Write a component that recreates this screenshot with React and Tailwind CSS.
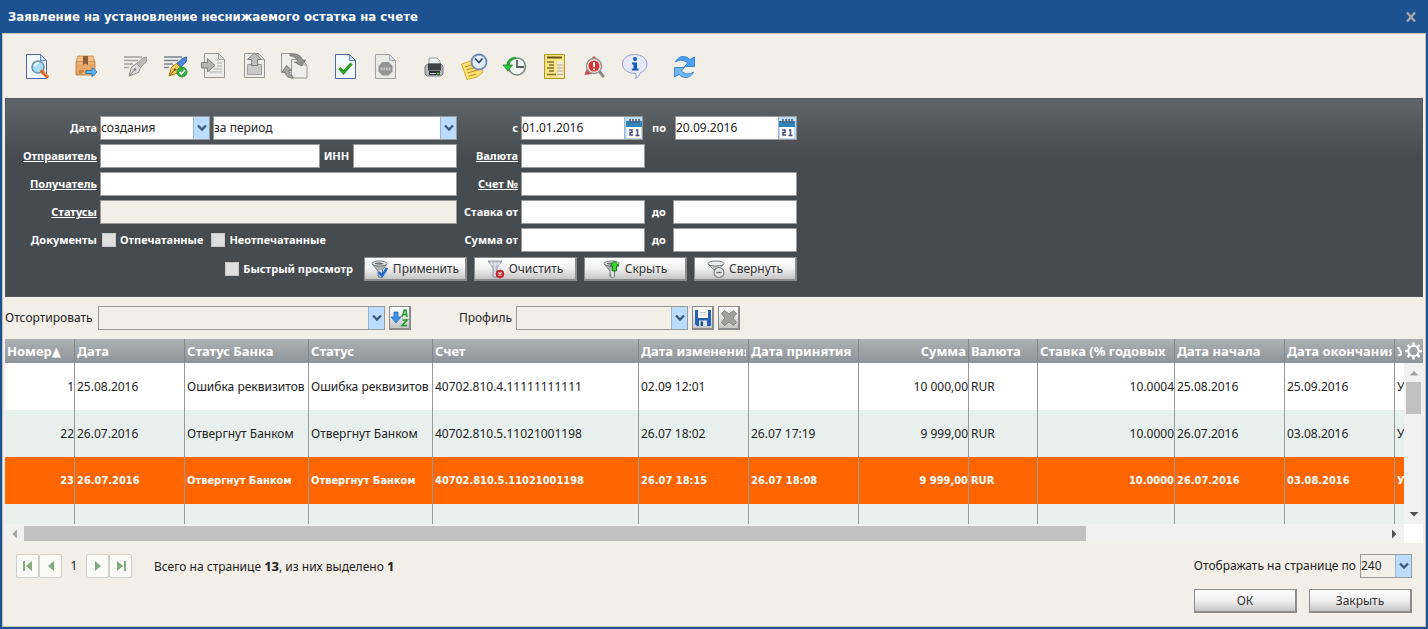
import {useState} from "react"

const columns = [
    {title: "Номер▲", key: "num", width: "w-[70px]", right: true},
    {title: "Дата", key: "date", width: "w-[110px]"},
    {title: "Статус Банка", key: "bankStatus", width: "w-[124px]"},
    {title: "Статус", key: "status", width: "w-[124px]"},
    {title: "Счет", key: "account", width: "w-[206px]"},
    {title: "Дата изменения", key: "changed", width: "w-[110px]"},
    {title: "Дата принятия", key: "accepted", width: "w-[110px]"},
    {title: "Сумма", key: "sum", width: "w-[110px]", right: true, rightTitle: true},
    {title: "Валюта", key: "currency", width: "w-[69px]"},
    {title: "Ставка (% годовых", key: "rate", width: "w-[137px]", right: true},
    {title: "Дата начала", key: "start", width: "w-[110px]"},
    {title: "Дата окончания", key: "end", width: "w-[110px]"},
    {title: "У", key: "terms", width: ""},
]

const rows = [
    {num: "1", date: "25.08.2016", bankStatus: "Ошибка реквизитов", status: "Ошибка реквизитов", account: "40702.810.4.11111111111", changed: "02.09 12:01", accepted: "", sum: "10 000,00", currency: "RUR", rate: "10.0004", start: "25.08.2016", end: "25.09.2016", terms: "У"},
    {num: "22", date: "26.07.2016", bankStatus: "Отвергнут Банком", status: "Отвергнут Банком", account: "40702.810.5.11021001198", changed: "26.07 18:02", accepted: "26.07 17:19", sum: "9 999,00", currency: "RUR", rate: "10.0000", start: "26.07.2016", end: "03.08.2016", terms: "У"},
    {num: "23", date: "26.07.2016", bankStatus: "Отвергнут Банком", status: "Отвергнут Банком", account: "40702.810.5.11021001198", changed: "26.07 18:15", accepted: "26.07 18:08", sum: "9 999,00", currency: "RUR", rate: "10.0000", start: "26.07.2016", end: "03.08.2016", terms: "У"},
    {},
]

const Svg = ({size = 26, children}) => (
    <svg width={size} height={size} viewBox={`0 0 ${size} ${size}`} fill="none" className="shrink-0 overflow-visible">{children}</svg>
)

const Page = ({x = 1, stroke = "#4a67a3", fill = "#f4f9ff"}) => <>
    <path d={`M${x + 0.5} 1.5h14l6 6v18h-20z`} fill={fill} stroke={stroke} />
    <path d={`M${x + 14.5} 1.5v6h6z`} fill="#c9dcf0" stroke={stroke} strokeWidth="0.8" />
</>

const GreyPage = ({x = 1}) => <>
    <path d={`M${x + 0.5} 0.5h14l6 6v18h-20z`} fill="#ededec" stroke="#979797" />
    <path d={`M${x + 14.5} 0.5v6h6z`} fill="#dadada" stroke="#979797" strokeWidth="0.8" />
</>

const ViewIcon = () => <Svg>
    <Page />
    <circle cx="13" cy="14" r="6" fill="#a9def8" stroke="#6b93b5" strokeWidth="1.6" />
    <path d="M9.5 13a4 4 0 0 1 4-3.2" stroke="#fff" strokeWidth="1.6" />
    <path d="M17 18.5l5 5" stroke="#e2622a" strokeWidth="3.6" strokeLinecap="round" />
    <path d="M18.5 18.8l4 4" stroke="#fdc08a" />
</Svg>

const BoxIcon = () => <Svg>
    <path d="M4 3h15l2 6H2z" fill="#f5bd82" stroke="#c58a4c" strokeWidth="0.8" />
    <path d="M2 9h19v13H2z" fill="#e7a766" stroke="#b97a3b" strokeWidth="0.8" />
    <path d="M3 10h17" stroke="#f6c792" />
    <path d="M9 3h5v9l-2.500-1.500L9 12z" fill="#8c5c37" />
    <path d="M5 18h5M5 20h3" stroke="#a86c31" />
    <path d="M12 17.500h6v-3l5 4.500-5 4.500v-3h-6z" fill="#5bb8f5" stroke="#2573b4" strokeWidth="0.8" />
</Svg>

const PenIcon = ({color}) => <Svg>
    <path d="M1 4h18M1 7.500h14M1 11h9M1 14.500h5" stroke={color ? "#77808c" : "#a3a3a1"} strokeWidth="1.500" />
    <path d="M13 11L20 5l3.500-1v4.500L17 15z" fill={color ? "#4f86dc" : "#b9b9b7"} stroke={color ? "#2c529c" : "#8b8b89"} strokeWidth="0.8" />
    <path d="M6 23l2.500-9 5-3.500 4 4-2 5z" fill={color ? "#f8cf5a" : "#dddddb"} stroke={color ? "#a97412" : "#8b8b89"} />
    <path d="M6.500 22.500l5-5.500" stroke={color ? "#80550b" : "#7e7e7c"} />
    <circle cx="12" cy="16.500" r="1.300" fill={color ? "#80550b" : "#7e7e7c"} />
    {color && <>
        <circle cx="19" cy="19" r="5" fill="#2fab3f" stroke="#188529" strokeWidth="0.8" />
        <path d="M16.500 19l2 2 3.500-4" stroke="#fff" strokeWidth="1.800" />
    </>}
</Svg>

const ImportIcon = () => <Svg>
    <GreyPage />
    <path d="M12 7h4M14 10h5M14 13h5M10 16h9M6 19h13" stroke="#c3c3c3" strokeWidth="1.500" />
    <path d="M-1.500 9.500h6v-4L12 12.500l-7.500 6.500v-4h-6z" fill="#b5b5b4" stroke="#7e7e7e" />
</Svg>

const ExportIcon = () => <Svg>
    <GreyPage />
    <path d="M4.500 11.500h14v10h-14z" fill="#c8c8c7" stroke="#a0a0a0" />
    <path d="M8.500 12.500v-6h-4L11.500 0l7 6.500h-4v6z" fill="#c0c0bf" stroke="#7e7e7e" />
</Svg>

const ExchangeIcon = () => <Svg>
    <path d="M-1.500.5h10l5 5v14h-15z" fill="#ededec" stroke="#979797" />
    <path d="M8.500 6.500h10l5.500 5.500v13H8.500z" fill="#ededec" stroke="#979797" />
    <path d="M18.500 6.500v5.500H24z" fill="#dadada" stroke="#979797" strokeWidth="0.8" />
    <path d="M7 1c6-1 11 1 12.500 6h3l-4 6-7-4h3.500C13.500 5 11 3 7 3z" fill="#929292" stroke="#6e6e6e" strokeWidth="0.8" />
    <path d="M10 25c-5 0-7.500-2-8-6h-3l4.500-6.500 5.500 5h-3c0 3 1.500 5 4 6z" fill="#a4a4a4" stroke="#6e6e6e" strokeWidth="0.8" />
</Svg>

const CheckIcon = () => <Svg>
    <Page x={3} />
    <path d="M7.500 15l4 4.500 8-9" stroke="#2ba01c" strokeWidth="3.200" />
</Svg>

const StopIcon = () => <Svg>
    <Page x={3} stroke="#a2a2a2" fill="#e9e9e8" />
    <path d="M10.500 9h6l4 4v5.500l-4 4h-6l-4-4V13z" fill="#929292" />
    <path d="M8.500 14.500h10v3h-10z" fill="#c4c4c4" />
    <path d="M11 14v4M13.500 14v4M16 14v4" stroke="#929292" strokeWidth="0.8" />
</Svg>

const PrinterIcon = () => <Svg>
    <path d="M8 5h8l3 3v6H8z" fill="#e9eeee" stroke="#98a2a4" />
    <path d="M4 13l3-2h13l2 2v8l-2 2H6l-2-2z" fill="#b4b8bc" stroke="#777c81" />
    <path d="M7 10.500h13v7H7z" fill="#3d4247" />
    <path d="M8 18h11v4H8z" fill="#2b2f33" />
    <path d="M9 20.500h6" stroke="#dfe3e6" />
    <path d="M16 20.500h2.500" stroke="#4ddb46" strokeWidth="1.500" />
</Svg>

const NoteIcon = () => <Svg>
    <path d="M.5 11L16 6l6 13-6 5-10 2.500z" fill="#fde277" stroke="#d7a72c" />
    <path d="M4 14l10-3M5.500 17l10-3M6.500 20l10-3M8 23l7-2" stroke="#bf8f22" strokeWidth="1.300" />
    <circle cx="18" cy="9" r="7.500" fill="#e2ecfa" stroke="#7289b3" strokeWidth="1.800" />
    <path d="M14 5.500l4 4 3.500-4" stroke="#31405d" strokeWidth="1.700" />
</Svg>

const HistoryIcon = () => <Svg>
    <circle cx="16" cy="13.500" r="8.500" fill="#f0f5f2" stroke="#7c8b86" strokeWidth="1.600" />
    <path d="M16 7v7h7" stroke="#52605c" strokeWidth="1.800" />
    <path d="M15 5c-5 0-8 3-8.300 7" stroke="#23a832" strokeWidth="2.600" />
    <path d="M2 12h9.500l-4.500 6z" fill="#2fc43d" stroke="#148322" strokeWidth="0.8" />
</Svg>

const ListIcon = () => <Svg>
    <path d="M3.500 1.500h20v24h-20z" fill="#f9e583" stroke="#b49628" />
    <path d="M16 8h6v16h-6z" fill="#eeeae0" />
    <path d="M6 4.500h15" stroke="#695410" strokeWidth="2" />
    <path d="M6 9h7M8 12h5M6 15h7M8 18h5M6 21.500h9" stroke="#80702f" strokeWidth="1.400" />
    <path d="M16 12h6M16 15h6M16 18h6M16 21.500h6" stroke="#b5ab84" />
</Svg>

const AlertIcon = () => <Svg>
    <path d="M3.500 22L6 15l5 6zM11 5l2-2 2 2z" fill="#c94949" />
    <path d="M18 18l4 5" stroke="#8a8a8a" strokeWidth="3" strokeLinecap="round" />
    <circle cx="13" cy="13" r="7.500" fill="#f3eeee" stroke="#96908f" strokeWidth="1.400" />
    <circle cx="13" cy="13" r="5.500" fill="#d63234" />
    <path d="M13 9v5M13 15.500v1.800" stroke="#fff" strokeWidth="2" />
</Svg>

const InfoIcon = () => <Svg>
    <path d="M13.500 1.500c7 0 12.500 4 12.500 9.500 0 4.500-3 7.500-7 9-.5 2.500-2 4.500-4.500 5.500.8-2 .8-3.500.3-5C7 20.500 1.500 16.500 1.500 11c0-5.500 5-9.500 12-9.500z" fill="#e6e8fb" stroke="#9d9fd0" />
    <circle cx="14" cy="6" r="2" fill="#1559bd" />
    <path d="M11 9.500h5v6h1.500v2h-6.700v-2h1.700v-4H11z" fill="#1559bd" />
</Svg>

const RefreshIcon = () => <Svg>
    <path d="M5.500 9C8 3 15 1.500 20 6.500L24.500 4v9.500h-10l3-3.500C14 6.500 9.500 6.500 5.500 9z" fill="#4aa2f0" stroke="#2a71bd" strokeWidth="0.8" />
    <path d="M23.500 19c-2.500 6-9.500 7.500-14.500 2.500L4.500 24v-9.500h10l-3 3.500c3.500 3.500 8 3.500 12 1z" fill="#6fb9f6" stroke="#2a71bd" strokeWidth="0.8" />
</Svg>

const Funnel = ({children}) => <Svg size={18}>
    <path d="M1 4l6 7v5.500c1.500 1 3.500 1 4.500 0V10L16 4z" fill="#aeb2b5" stroke="#62676a" strokeWidth="0.8" />
    <path d="M8 11l1 6h1.500V10z" fill="#f2f3f3" />
    <ellipse cx="8.500" cy="3.500" rx="7.500" ry="2.500" fill="#e8eaea" stroke="#55595c" strokeWidth="0.8" />
    <path d="M3 3.500c3-1.500 8-1.500 10 .5-3 1-7 1-10-.5z" fill="#6a6e71" />
    {children}
</Svg>

const ApplyIcon = () => <Funnel><path d="M8 12l3 4 5-8" stroke="#1e6bd6" strokeWidth="2.600" /></Funnel>

const ClearIcon = () => <Svg size={18}>
    <path d="M1 1h14l-5 7v9H6V8z" fill="#c5c9d1" stroke="#81868f" strokeWidth="0.8" />
    <path d="M4 2v4M8 2v14M12 2v3M2 4h12" stroke="#f0f1f4" strokeWidth="0.7" />
    <circle cx="13" cy="14" r="4" fill="#d02c32" stroke="#9b1c22" strokeWidth="0.6" />
    <path d="M11.500 12.500l3 3M14.500 12.500l-3 3" stroke="#fff" strokeWidth="1.200" />
</Svg>

const HideIcon = () => <Funnel><path d="M9.500 11V6H7l4.500-5L16 6h-2.500v5z" fill="#3fd62e" stroke="#11730e" strokeWidth="0.9" /></Funnel>

const CollapseIcon = () => <Svg size={18}>
    <path d="M1 4l6 6 6-2 4-4z" fill="#c3c5c6" stroke="#7b7f81" strokeWidth="0.8" />
    <ellipse cx="9" cy="3.500" rx="8" ry="2.500" fill="#e9eaea" stroke="#66696b" strokeWidth="0.8" />
    <circle cx="12" cy="12.500" r="5" fill="#e3e4e4" stroke="#808384" strokeWidth="1.200" />
    <path d="M9.500 12.500h5" stroke="#6b6e70" strokeWidth="1.400" />
</Svg>

const SortIcon = () => <svg width="18" height="18" viewBox="0 0 18 18">
    <path d="M3 3h4v5h3l-5 6-5-6h3z" fill="#3c93ea" stroke="#1d5fae" strokeWidth="0.7" />
    <path d="M11 8l2.500-7h1.300L16 8M12 5.500h3.500M11.500 11h4.500l-5 5.500h5" fill="none" stroke="#1f9c2b" strokeWidth="1.600" />
</svg>

const SaveIcon = () => <svg width="18" height="18" viewBox="0 0 18 18">
    <path d="M1 1h16v16H3l-2-2z" fill="#2263b8" />
    <path d="M4 1h10v8H4z" fill="#fff" />
    <path d="M5.500 3.500h7M5.500 6h7" stroke="#c1c6cc" />
    <path d="M5 11.500h8V17H5z" fill="#dfe6ee" />
    <path d="M6.500 12.500h2.500V17H6.500z" fill="#1d4f94" />
</svg>

const DeleteIcon = () => <svg width="18" height="18" viewBox="0 0 18 18">
    <path d="M1.500 4.500l3-3L9 5l4.500-3.500 3 3L13 9l3.500 4.500-3 3L9 13l-4.500 3.500-3-3L5 9z" fill="#a0a09e" stroke="#858583" />
</svg>

const CalendarIcon = () => <svg width="16" height="20" viewBox="0 0 16 20">
    <path d="M1 8h14v12H1z" fill="#fff" />
    <path d="M0 3h16v6H0z" fill="#2d84b8" />
    <path d="M4 1v4M7 1v4M10 1v4M13 1v4" stroke="#5a5f6c" strokeWidth="1.600" />
    <path d="M3 12h3v2.500H4V17h3M10 12h1.500v5M9.500 17.500h4" fill="none" stroke="#4b4d78" strokeWidth="1.600" />
</svg>

const GearIcon = () => <svg width="19" height="20" viewBox="0 0 20 20" fill="none" stroke="#fff" strokeWidth="2">
    <circle cx="10" cy="10" r="5.500" />
    <path d="M10 4V1M10 16v3M4 10H1M16 10h3M5.800 5.800L3.600 3.600M14.200 14.200l2.200 2.200M5.800 14.200l-2.200 2.200M14.200 5.800l2.200-2.200" strokeWidth="2.600" />
</svg>

const toolbar = [
    [["Просмотр", <ViewIcon />]],
    [["Отправить", <BoxIcon />]],
    [["Подписать", <PenIcon />], ["Проверить подпись", <PenIcon color />], ["Импорт", <ImportIcon />], ["Экспорт", <ExportIcon />], ["Обмен", <ExchangeIcon />]],
    [["Принять", <CheckIcon />], ["Остановить", <StopIcon />]],
    [["Печать", <PrinterIcon />], ["Заметки", <NoteIcon />], ["История", <HistoryIcon />], ["Список", <ListIcon />], ["Ошибки", <AlertIcon />], ["Информация", <InfoIcon />]],
    [["Обновить", <RefreshIcon />]],
]

const Select = ({label, options, className, bg = "bg-white"}) => (
    <span className={`relative flex h-6 border border-[#9a9a9a] ${bg} ${className}`}>
        <select aria-label={label} className="w-full appearance-none outline-none">
            {options.map((o) => <option key={o}>{o}</option>)}
        </select>
        <span className="pointer-events-none absolute inset-y-0 right-0 flex w-4 items-center justify-center border-l border-[#9ab4cf] bg-[#bbddfd]">
            <svg width="10" height="8" viewBox="0 0 10 8"><path d="M1 1.500l4 4 4-4" fill="none" stroke="#3c5a84" strokeWidth="2.400" /></svg>
        </span>
    </span>
)

const Input = ({label, className, ...rest}) => (
    <input type="text" aria-label={label} className={`h-6 min-w-0 border border-[#9a9a9a] pl-px outline-none ${className}`} {...rest} />
)

const DateInput = ({label, value}) => (
    <span className="flex h-6 w-[122px] border border-[#9a9a9a] bg-white">
        <input type="text" aria-label={label} defaultValue={value} className="w-full min-w-0 outline-none" />
        <button aria-label="Календарь" className="flex w-[18px] shrink-0 items-center justify-center border-l border-[#9ab4cf] bg-[#bbddfd]"><CalendarIcon /></button>
    </span>
)

const Label = ({children}) => <span className="text-right text-[11px] font-bold whitespace-nowrap text-white">{children}</span>

const LabelLink = ({href, children}) => <a href={href} className="text-right text-[11px] font-bold text-white underline">{children}</a>

const Check = ({label}) => (
    <label className="flex items-center gap-1 text-[11px] font-bold text-white">
        <input type="checkbox" className="size-[14px] appearance-none border border-[#c9c9c9] bg-[#dedede] checked:bg-[#3c5a84]" />
        {label}
    </label>
)

const Button = ({children}) => (
    <button className="flex h-6 w-[103px] items-center justify-center gap-1 border border-r-2 border-b-2 border-[#8c8c8c] bg-linear-to-b from-white via-[#f0f0f0] to-[#c6c6c6] text-[#333]">{children}</button>
)

const SmallButton = ({label, children}) => (
    <button aria-label={label} className="flex h-6 w-[22px] items-center justify-center border border-r-2 border-b-2 border-[#8c8c8c] bg-linear-to-b from-white to-[#c6c6c6]">{children}</button>
)

const PagerButton = ({label, d}) => (
    <button aria-label={label} className="flex h-6 w-[23px] items-center justify-center rounded-xs border border-[#cfcfcb] bg-[#fafaf7]">
        <svg width="12" height="12" viewBox="0 0 12 12" fill="#84ab7e"><path d={d} /></svg>
    </button>
)

const Arrow = ({d, color = "#505050"}) => (
    <svg width="10" height="10" viewBox="0 0 10 10" fill={color} className="shrink-0"><path d={d} /></svg>
)

export default function App() {
    const [selected, setSelected] = useState(2)

    return <div className="flex min-h-screen flex-col bg-[#1c5192] px-[2px] pb-[2px] font-['Noto_Sans','DejaVu_Sans_Condensed',sans-serif] text-[12px] leading-4 text-[#222]">
        <header className="flex h-[33px] items-center justify-between px-1.5 font-['DejaVu_Sans_Condensed','Noto_Sans',sans-serif] text-[13px] font-bold text-white">
            <h1>Заявление на установление неснижаемого остатка на счете</h1>
            <button aria-label="Закрыть окно" className="px-1">
                <svg width="10" height="10" viewBox="0 0 10 10"><path d="M1 0.500l8 9M9 0.500l-8 9" stroke="#a3a5a6" strokeWidth="2.400" /></svg>
            </button>
        </header>

        <main className="flex grow flex-col border border-[#c5c3b6] bg-[#f2efe8] px-[2px]">
            <nav className="flex h-16 items-center gap-[23px] pl-5">
                {toolbar.map((group, i) => <div key={i} className="flex gap-3.5">
                    {group.map(([name, icon]) => <button key={name} aria-label={name}>{icon}</button>)}
                </div>)}
            </nav>

            <form onSubmit={(e) => e.preventDefault()} className="border border-[#55595c] bg-[#464b4f] bg-linear-to-b from-[#5f6568] to-[#464b4f] to-30% pt-[17px] pb-[15px]">
                <div className="grid grid-cols-[91px_357px_58px_276px] items-center gap-x-[3px] gap-y-1">
                    <Label>Дата</Label>
                    <div className="flex justify-between">
                        <Select label="Дата" options={["создания"]} className="w-[110px]" />
                        <Select label="Период" options={["за период"]} className="w-[244px]" />
                    </div>
                    <Label>с</Label>
                    <div className="flex items-center justify-between">
                        <DateInput label="с" value="01.01.2016" />
                        <Label>по</Label>
                        <DateInput label="по" value="20.09.2016" />
                    </div>

                    <LabelLink href="#sender">Отправитель</LabelLink>
                    <div className="flex items-center justify-between">
                        <Input label="Отправитель" className="w-[220px] bg-white" />
                        <Label>ИНН</Label>
                        <Input label="ИНН" className="w-[104px] bg-white" />
                    </div>
                    <LabelLink href="#currency">Валюта</LabelLink>
                    <Input label="Валюта" className="w-[124px] bg-white" />

                    <LabelLink href="#receiver">Получатель</LabelLink>
                    <Input label="Получатель" className="bg-white" />
                    <LabelLink href="#account">Счет №</LabelLink>
                    <Input label="Счет №" className="bg-white" />

                    <LabelLink href="#statuses">Статусы</LabelLink>
                    <Input label="Статусы" className="bg-[#f2efe8]" readOnly />
                    <Label>Ставка от</Label>
                    <div className="flex items-center justify-between">
                        <Input label="Ставка от" className="w-[124px] bg-white" />
                        <Label>до</Label>
                        <Input label="Ставка до" className="w-[124px] bg-white" />
                    </div>

                    <Label>Документы</Label>
                    <div className="flex gap-2 pl-0.5">
                        <Check label="Отпечатанные" />
                        <Check label="Неотпечатанные" />
                    </div>
                    <Label>Сумма от</Label>
                    <div className="flex items-center justify-between">
                        <Input label="Сумма от" className="w-[124px] bg-white" />
                        <Label>до</Label>
                        <Input label="Сумма до" className="w-[124px] bg-white" />
                    </div>
                </div>
                <div className="mt-[5px] flex w-[791px] items-center justify-end gap-[11px]">
                    <Check label="Быстрый просмотр" />
                    <div className="flex gap-[7px]">
                        <Button><ApplyIcon />Применить</Button>
                        <Button><ClearIcon />Очистить</Button>
                        <Button><HideIcon />Скрыть</Button>
                        <Button><CollapseIcon />Свернуть</Button>
                    </div>
                </div>
            </form>

            <div className="flex items-center gap-1 py-[9px]">
                <span className="w-[89px]">Отсортировать</span>
                <Select label="Отсортировать" options={[""]} className="w-[287px]" bg="bg-[#f2efe8]" />
                <SmallButton label="Порядок сортировки"><SortIcon /></SmallButton>
                <span className="w-[97px] text-right">Профиль</span>
                <Select label="Профиль" options={[""]} className="w-[172px]" bg="bg-[#f2efe8]" />
                <SmallButton label="Сохранить профиль"><SaveIcon /></SmallButton>
                <SmallButton label="Удалить профиль"><DeleteIcon /></SmallButton>
            </div>

            <section className="flex h-[185px] bg-white">
                <div className="min-w-0 grow overflow-hidden">
                    <table className="w-full table-fixed border-separate border-spacing-0">
                        <thead>
                            <tr className="h-6">
                                {columns.map((c) => <th key={c.key} className={`${c.width} ${c.rightTitle ? "text-right" : "text-left"} border-r border-[#80868a] bg-linear-to-b from-[#adb1b4] to-[#8e9498] px-0.5 py-0 text-[13px] font-bold whitespace-nowrap text-white last:border-r-0`}>
                                    <div className="overflow-hidden">{c.title}</div>
                                </th>)}
                            </tr>
                        </thead>
                        <tbody>
                            {rows.map((row, i) => <tr key={i} onClick={() => setSelected(i)} className={`h-[47px] ${i === selected ? "bg-[#ff6600] font-['DejaVu_Sans_Condensed','Noto_Sans',sans-serif] text-[11px] font-bold text-white" : i % 2 ? "bg-[#e8f0ed]" : "bg-white"}`}>
                                {columns.map((c) => <td key={c.key} className={`${c.right ? "text-right" : "pl-0.5"} overflow-hidden border-r border-[#999] p-0 whitespace-nowrap last:border-r-0`}>{row[c.key]}</td>)}
                            </tr>)}
                        </tbody>
                    </table>
                </div>
                <div className="flex w-[19px] shrink-0 flex-col">
                    <button aria-label="Настройка столбцов" className="flex h-6 items-center justify-center bg-linear-to-b from-[#adb1b4] to-[#8e9498]"><GearIcon /></button>
                    <div className="flex grow flex-col items-center justify-between bg-[#f1f1f1] py-[5px]">
                        <Arrow d="M0.500 7.500L5 3l4.500 4.500z" color="#a3a3a3" />
                        <div className="mt-1 mb-auto h-8 w-[15px] bg-[#c1c1c1]" />
                        <Arrow d="M0.500 3L5 7.500 9.500 3z" />
                    </div>
                </div>
            </section>
            <div className="flex h-[19px] bg-white">
                <div className="flex grow items-center bg-[#f1f1f1] px-[5px]">
                    <Arrow d="M7 0.500L2.500 5 7 9.500z" color="#a3a3a3" />
                    <div className="mx-1 flex grow"><div className="h-[15px] w-[78%] bg-[#c1c1c1]" /></div>
                    <Arrow d="M3 0.500L7.500 5 3 9.500z" />
                </div>
                <div className="w-[19px]" />
            </div>

            <footer className="flex grow flex-col gap-[11px] pt-[11px] pr-[11px] pb-3 pl-[11px]">
                <div className="flex items-center justify-between">
                    <div className="flex items-center">
                        <PagerButton label="Первая" d="M1 1h2v10H1zM10 1v10L4 6z" />
                        <PagerButton label="Предыдущая" d="M9 1v10L3 6z" />
                        <span className="w-6 text-center">1</span>
                        <PagerButton label="Следующая" d="M3 1v10l6-5z" />
                        <PagerButton label="Последняя" d="M9 1h2v10H9zM2 1v10l6-5z" />
                        <p className="ml-[22px]">Всего на странице <b className="text-[13px]">13</b>, из них выделено <b className="text-[13px]">1</b></p>
                    </div>
                    <div className="flex items-center gap-1">
                        <span>Отображать на странице по</span>
                        <Select label="Отображать на странице по" options={["240"]} className="w-[52px]" bg="bg-[#f2efe8]" />
                    </div>
                </div>
                <div className="flex justify-end gap-3">
                    <Button>ОК</Button>
                    <Button>Закрыть</Button>
                </div>
            </footer>
        </main>
    </div>
}
